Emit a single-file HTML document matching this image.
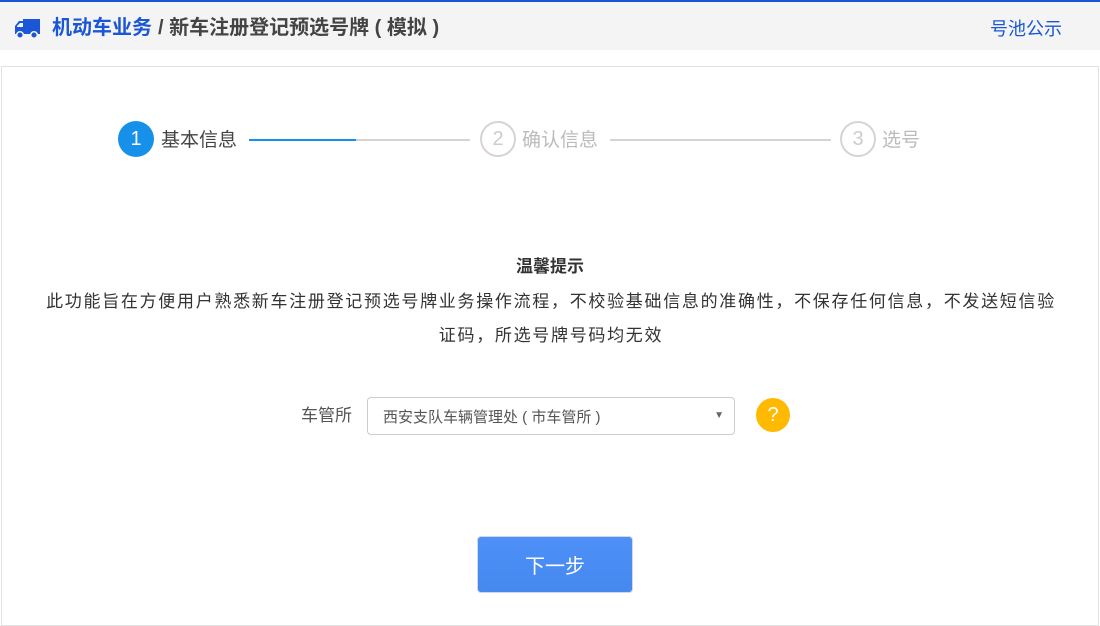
<!DOCTYPE html>
<html><head><meta charset="utf-8"><style>
*{margin:0;padding:0;box-sizing:border-box}
body{width:1100px;height:604px;overflow:hidden;background:#fff;font-family:"Liberation Sans","Noto Sans CJK SC",sans-serif;position:relative}
.top{position:absolute;left:0;top:0;width:1100px;height:2px;background:#1a56d6}
.hdr{position:absolute;left:0;top:2px;width:1100px;height:48px;background:#f4f4f4}
.t{position:absolute;top:14px;font-size:20px;font-weight:bold;line-height:24px}
.box{position:absolute;left:1px;top:66px;width:1098px;height:560px;border:1px solid #e2e2e2}
.c{position:absolute;width:36px;height:36px;border-radius:50%;font-size:20px;line-height:36px;text-align:center}
.s{position:absolute;top:129px;font-size:19px;line-height:24px}
.ln{position:absolute;top:139px;height:2px;background:#d8d2d2}
</style></head><body>
<div class="top"></div>
<div class="hdr">
<svg style="position:absolute;left:14px;top:16px" width="27" height="22" viewBox="0 0 27 22"><path d="M9 1h17v15H9z M1 8l4-5h5v13H1z" fill="#1a56d6"/><path d="M3 8l3-3h3v4H3z" fill="#f4f4f4"/><circle cx="6" cy="17" r="3.3" fill="#1a56d6" stroke="#f4f4f4" stroke-width="1.5"/><circle cx="20" cy="17" r="3.3" fill="#1a56d6" stroke="#f4f4f4" stroke-width="1.5"/></svg>
<div class="t" style="left:52px;color:#1a56d6">机动车业务</div>
<div class="t" style="left:158px;color:#444">/ 新车注册登记预选号牌 ( 模拟 )</div>
<div style="position:absolute;left:990px;top:13px;font-size:18px;color:#1a56d6">号池公示</div>
</div>
<div class="box"></div>
<div class="c" style="left:118px;top:121px;background:#1690e8;color:#fff">1</div>
<div class="s" style="left:161px;color:#444">基本信息</div>
<div class="ln" style="left:249px;width:221px"></div>
<div class="ln" style="left:249px;width:107px;background:#1690e8"></div>
<div class="c" style="left:480px;top:121px;border:2px solid #d8d2d2;color:#ccc;line-height:32px">2</div>
<div class="s" style="left:522px;color:#bbb">确认信息</div>
<div class="ln" style="left:610px;width:221px"></div>
<div class="c" style="left:840px;top:121px;border:2px solid #d8d2d2;color:#ccc;line-height:32px">3</div>
<div class="s" style="left:882px;color:#bbb">选号</div>
<div style="position:absolute;left:0;width:1100px;top:252px;text-align:center;font-size:17px;font-weight:bold;color:#333">温馨提示</div>
<div style="position:absolute;left:42px;width:1018px;top:285px;text-align:center;font-size:17px;letter-spacing:1.7px;line-height:34px;color:#333">此功能旨在方便用户熟悉新车注册登记预选号牌业务操作流程，不校验基础信息的准确性，不保存任何信息，不发送短信验证码，所选号牌号码均无效</div>
<div style="position:absolute;left:301px;top:401px;font-size:17px;color:#555">车管所</div>
<div style="position:absolute;left:367px;top:397px;width:368px;height:38px;border:1px solid #ccc;border-radius:4px;font-size:15px;color:#555;line-height:40px;padding-left:15px">西安支队车辆管理处 ( 市车管所 )<span style="position:absolute;right:10px;top:0;font-size:10px;color:#666;line-height:36px">▼</span></div>
<div style="position:absolute;left:756px;top:398px;width:34px;height:34px;border-radius:50%;background:#ffb900;color:#fff;text-align:center;line-height:34px;font-size:20px">?</div>
<div style="position:absolute;left:477px;top:536px;width:156px;height:57px;border-radius:4px;background:linear-gradient(#4d90f7,#4588ee);border:1px solid #cfd8e6;color:#fff;font-size:20px;text-align:center;line-height:61px">下一步</div>
</body></html>
